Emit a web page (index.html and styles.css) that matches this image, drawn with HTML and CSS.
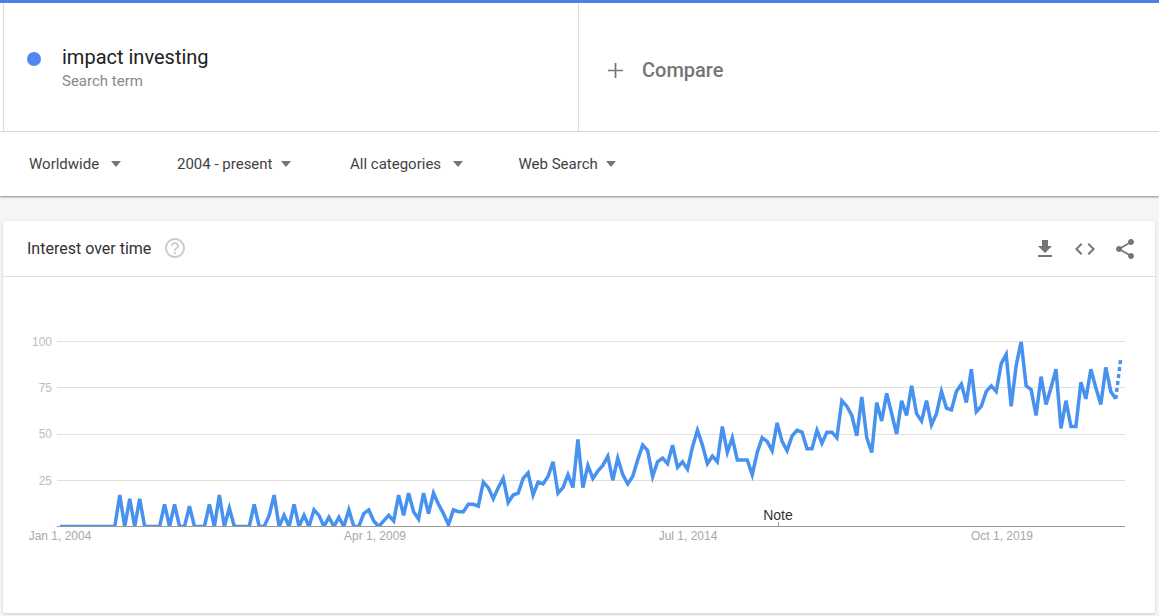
FILE: index.html
```html
<!DOCTYPE html>
<html lang="en">
<head>
    <meta charset="UTF-8">
    <title>impact investing - Explore - Google Trends</title>
    <link rel="stylesheet" href="styles.css">
</head>
<body>
    <header class="terms">
        <div class="term">
            <span class="term-dot"></span>
            <div>
                <div class="term-name">impact investing</div>
                <div class="term-type">Search term</div>
            </div>
        </div>
        <div class="compare">
            <svg class="compare-plus" viewBox="0 0 14 14"><path d="M6.2 0h1.6v6.2H14v1.6H7.8V14H6.2V7.8H0V6.2h6.2z"/></svg>
            <span>Compare</span>
        </div>
    </header>

    <nav class="filters">
        <div class="filter filter-geo">Worldwide<span class="caret"></span></div>
        <div class="filter filter-time">2004 - present<span class="caret"></span></div>
        <div class="filter filter-cat">All categories<span class="caret"></span></div>
        <div class="filter filter-prop">Web Search<span class="caret"></span></div>
    </nav>

    <main class="content">
        <section class="card">
            <div class="card-header">
                <h2 class="card-title">Interest over time</h2>
                <svg class="help-icon" viewBox="0 0 24 24"><path d="M11 18h2v-2h-2v2zm1-16C6.48 2 2 6.48 2 12s4.48 10 10 10 10-4.48 10-10S17.52 2 12 2zm0 18c-4.41 0-8-3.59-8-8s3.59-8 8-8 8 3.59 8 8-3.59 8-8 8zm0-14c-2.21 0-4 1.79-4 4h2c0-1.1.9-2 2-2s2 .9 2 2c0 2-3 1.75-3 5h2c0-2.25 3-2.5 3-5 0-2.21-1.79-4-4-4z"/></svg>
                <div class="card-actions">
                    <svg class="action-icon" viewBox="0 0 24 24"><path d="M19 9h-4V3H9v6H5l7 7 7-7zM5 18v2h14v-2H5z"/></svg>
                    <svg class="action-icon" viewBox="0 0 24 24"><path d="M9.4 16.6L4.8 12l4.6-4.6L8 6l-6 6 6 6 1.4-1.4zm5.2 0l4.6-4.6-4.6-4.6L16 6l6 6-6 6-1.4-1.4z"/></svg>
                    <svg class="action-icon" viewBox="0 0 24 24"><path d="M18 16.08c-.76 0-1.44.3-1.96.77L8.91 12.7c.05-.23.09-.46.09-.7s-.04-.47-.09-.7l7.05-4.11c.54.5 1.25.81 2.04.81 1.66 0 3-1.34 3-3s-1.34-3-3-3-3 1.34-3 3c0 .24.04.47.09.7L8.04 9.81C7.5 9.31 6.79 9 6 9c-1.66 0-3 1.34-3 3s1.34 3 3 3c.79 0 1.5-.31 2.04-.81l7.12 4.16c-.05.21-.08.43-.08.65 0 1.61 1.31 2.92 2.92 2.92 1.61 0 2.92-1.31 2.92-2.92s-1.31-2.92-2.92-2.92z"/></svg>
                </div>
            </div>

            <!-- viewBox uses page coordinates, the plot inside it uses month,100-value -->
            <svg class="chart" viewBox="3 277 1152 336">
                <line class="grid" x1="57" x2="1125" y1="341.5" y2="341.5"/>
                <line class="grid" x1="57" x2="1125" y1="387.5" y2="387.5"/>
                <line class="grid" x1="57" x2="1125" y1="434.5" y2="434.5"/>
                <line class="grid" x1="57" x2="1125" y1="480.5" y2="480.5"/>

                <text class="y-label" x="52" y="346">100</text>
                <text class="y-label" x="52" y="392">75</text>
                <text class="y-label" x="52" y="438">50</text>
                <text class="y-label" x="52" y="485">25</text>

                <svg x="60" y="341.5" width="1070.7" height="185" viewBox="0 0 215 100" preserveAspectRatio="none">
                    <polyline class="trend" points="0,100 11,100 12,83 13,100 14,85 15,100 16,85 17,100 20,100 21,88 22,100 23,88 24,100 25,100 26,89 27,100 29,100 30,88 31,100 32,83 33,100 34,90 35,100 38,100 39,88 40,100 41,100 42,94 43,83 44,100 45,94 46,100 47,88 48,100 49,94 50,100 51,91 52,94 53,100 54,95 55,100 56,95 57,100 58,91 59,100 60,100 61,93 62,91 63,97 64,100 65,97 66,94 67,97 68,83 69,94 70,82 71,92 72,96 73,82 74,93 75,82 76,88 77,93 78,99 79,91 80,92 81,92 82,88 83,88 84,89 85,76 86,79 87,85 88,79 89,74 90,87 91,83 92,82 93,74 94,71 95,83 96,76 97,77 98,73 99,65 100,82 101,79 102,72 103,79 104,53 105,79 106,67 107,74 108,70 109,67 110,62 111,75 112,63 113,72 114,77 115,73 116,64 117,56 118,59 119,73 120,65 121,63 122,66 123,56 124,68 125,65 126,69 127,57 128,48 129,56 130,66 131,62 132,65 133,46 134,60 135,52 136,64 137,64 138,64 139,72 140,60 141,52 142,54 143,59 144,44 145,54 146,59 147,51 148,48 149,49 150,58 151,58 152,48 153,55 154,49 155,49 156,52 157,32 158,35 159,40 160,51 161,30 162,52 163,60 164,33 165,43 166,28 167,39 168,50 169,32 170,40 171,24 172,39 173,43 174,32 175,45 176,39 177,27 178,36 179,37 180,27 181,23 182,33 183,15 184,38 185,35 186,27 187,24 188,27 189,12 190,7 191,35 192,13 193,0 194,24 195,26 196,40 197,19 198,34 199,25 200,15 201,47 202,32 203,46 204,46 205,22 206,31 207,15 208,25 209,34 210,14 211,27 212,31"/>
                    <polyline class="trend trend-partial" points="212,31 213,9"/>
                </svg>

                <line class="axis" x1="57" x2="1125" y1="526.5" y2="526.5"/>
                <line class="note-tick" x1="778.5" x2="778.5" y1="522" y2="526"/>
                <text class="note" x="778" y="520">Note</text>

                <text class="x-label" x="60" y="540">Jan 1, 2004</text>
                <text class="x-label" x="375" y="540">Apr 1, 2009</text>
                <text class="x-label" x="688" y="540">Jul 1, 2014</text>
                <text class="x-label" x="1002" y="540">Oct 1, 2019</text>
            </svg>
        </section>
    </main>
</body>
</html>
```

FILE: styles.css
```css
html, body {
    height: 100%;
}
body {
    margin: 0;
    display: flex;
    flex-direction: column;
    overflow: hidden;
    font-family: 'Roboto', sans-serif;
    background-color: #f5f5f5;
    color: #212121;
}
.terms {
    display: flex;
    height: 128px;
    padding-left: 3px;
    background: #fff;
    border-top: 3px solid #4f7fe6;
    border-bottom: 1px solid #dcdcdc;
}
.term {
    display: flex;
    align-items: center;
    box-sizing: border-box;
    width: 576px;
    padding: 2px 0 0 23px;
    border-left: 1px solid #dcdcdc;
    border-right: 1px solid #dcdcdc;
}
.term-dot {
    width: 14px;
    height: 14px;
    margin-right: 21px;
    margin-top: -18px;
    border-radius: 50%;
    background: #5585f2;
}
.term-name {
    font-size: 20px;
    line-height: 24px;
    color: #212121;
}
.term-type {
    margin-top: 2px;
    font-size: 15px;
    line-height: 20px;
    color: #8a8a8a;
}
.compare {
    display: flex;
    align-items: center;
    padding: 6px 0 0 29px;
    font-size: 20px;
    font-weight: 500;
    color: #757575;
}
.compare-plus {
    width: 15px;
    height: 15px;
    margin-right: 19px;
    fill: #757575;
}
.filters {
    display: flex;
    align-items: center;
    height: 64px;
    padding-left: 29px;
    background: #fff;
    box-shadow: 0 1px 2px rgba(0, 0, 0, 0.45);
    position: relative;
    font-size: 15px;
    color: #424242;
}
.filter {
    display: flex;
    align-items: center;
}
.filter-geo {
    width: 148px;
}
.filter-time {
    width: 173px;
}
.filter-cat {
    width: 168.5px;
}
.caret {
    width: 0;
    height: 0;
    margin-left: 8px;
    border-left: 5.5px solid transparent;
    border-right: 5.5px solid transparent;
    border-top: 6px solid #757575;
}
.filter-geo .caret, .filter-cat .caret {
    margin-left: 12px;
}
.content {
    flex: 1;
    padding: 25px 4px 3px 3px;
    min-height: 0;
}
.card {
    display: flex;
    flex-direction: column;
    height: 100%;
    box-sizing: border-box;
    background: #fff;
    border-radius: 2px;
    box-shadow: 0 1px 3px rgba(0, 0, 0, 0.18);
}
.card-header {
    display: flex;
    align-items: center;
    flex: none;
    height: 56px;
    box-sizing: border-box;
    padding: 0 18px 0 24px;
    border-bottom: 1px solid #e0e0e0;
}
.card-title {
    margin: 0;
    font-size: 16px;
    font-weight: 400;
    color: #333;
}
.help-icon {
    width: 24px;
    height: 24px;
    margin: -2px 0 0 12px;
    fill: #ccc;
}
.card-actions {
    display: flex;
    gap: 16px;
    margin-left: auto;
}
.action-icon {
    display: block;
    width: 24px;
    height: 24px;
    fill: #757575;
}
.chart {
    display: block;
    flex: none;
    width: 1152px;
    height: 336px;
    font-family: 'Liberation Sans', Arial, sans-serif;
}
.grid {
    stroke: #e0e0e0;
    stroke-width: 1;
}
.axis {
    stroke: #9a9a9a;
    stroke-width: 1;
}
.trend {
    fill: none;
    stroke: #4791ef;
    stroke-width: 3.5;
    vector-effect: non-scaling-stroke;
}
.trend-partial {
    stroke-dasharray: 4 3;
}
.y-label {
    font-size: 12px;
    fill: #bdbdbd;
    text-anchor: end;
}
.x-label {
    font-size: 12px;
    fill: #a8a8a8;
    text-anchor: middle;
}
.note {
    font-size: 14px;
    fill: #333;
    text-anchor: middle;
}
.note-tick {
    stroke: #999;
    stroke-width: 1;
}
```
